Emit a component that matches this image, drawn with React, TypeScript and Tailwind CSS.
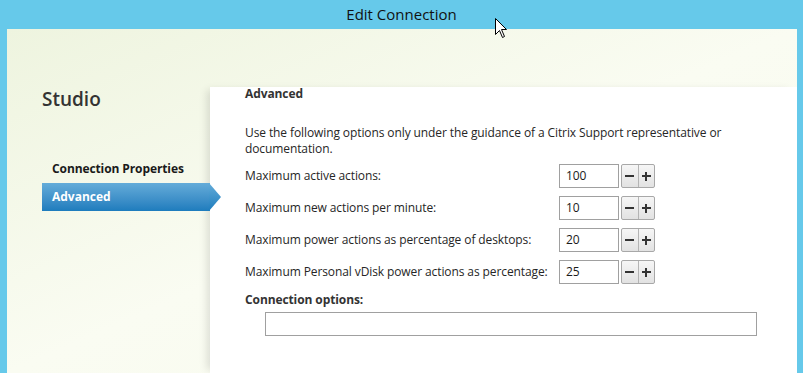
const font = { fontFamily: '"Open Sans", "Noto Sans", sans-serif' }

interface Row {
  label: string
  value: string
}

const rows: Row[] = [
  { label: 'Maximum active actions:', value: '100' },
  { label: 'Maximum new actions per minute:', value: '10' },
  { label: 'Maximum power actions as percentage of desktops:', value: '20' },
  { label: 'Maximum Personal vDisk power actions as percentage:', value: '25' },
]

function Spinner({ value }: { value: string }) {
  return (
    <div className="flex items-center gap-[2px]">
      <div className="w-[60px] h-[24px] border border-[#a0a0a0] bg-white flex items-center pl-[6px] text-[12px] text-[#1a1a1a]">
        {value}
      </div>
      <div className="flex h-[24px] w-[34px] border border-[#a8a8a8] rounded-[2px] bg-gradient-to-b from-[#f6f6f6] to-[#e2e2e2]">
        <div className="flex-1 flex items-center justify-center border-r border-[#b4b4b4]">
          <span className="block w-[9px] h-[2px] bg-[#333]" />
        </div>
        <div className="flex-1 flex items-center justify-center">
          <span className="relative block w-[9px] h-[9px]">
            <span className="absolute left-0 top-[3.5px] w-[9px] h-[2px] bg-[#333]" />
            <span className="absolute top-0 left-[3.5px] w-[2px] h-[9px] bg-[#333]" />
          </span>
        </div>
      </div>
    </div>
  )
}

function Cursor() {
  return (
    <svg className="absolute left-[495px] top-[18px]" width="13" height="21" viewBox="0 0 13 21">
      <path
        d="M0.5 0.5 L0.5 16.5 L4.5 12.5 L7.5 19.5 L9.5 18.5 L6.5 11.5 L11.5 11.5 Z"
        fill="#fff"
        stroke="#000"
        strokeWidth="1"
      />
    </svg>
  )
}

export default function App() {
  return (
    <div
      className="relative w-[803px] h-[373px] bg-[#66c9ea] flex flex-col overflow-hidden text-[#262626]"
      style={font}
    >
      <div className="h-[29px] flex items-center justify-center text-[15px] text-[#111]">
        Edit Connection
      </div>
      <Cursor />
      <div className="flex-1 ml-[7px] mr-[6px] flex bg-gradient-to-br from-[#eef4df] via-[#fafcf2] to-[#f7faed]">
        <aside className="w-[203px] shrink-0 pt-[57px]">
          <div className="pl-[35px] text-[19px] leading-[26px] font-semibold text-[#333]">Studio</div>
          <div className="mt-[47px] pl-[45px] text-[12px] font-bold leading-[20px] tracking-[-0.1px] text-[#1a1a1a]">
            Connection Properties
          </div>
          <div className="relative mt-[4px] ml-[35px] h-[28px]">
            <div className="h-full w-[168px] bg-gradient-to-b from-[#64acd9] to-[#1d7cbd] flex items-center pl-[10px] text-[12px] font-bold text-white">
              Advanced
            </div>
            <svg className="absolute left-[167px] top-0" width="13" height="28" viewBox="0 0 13 28">
              <defs>
                <linearGradient id="arr" x1="0" y1="0" x2="0" y2="1">
                  <stop offset="0" stopColor="#64acd9" />
                  <stop offset="1" stopColor="#1d7cbd" />
                </linearGradient>
              </defs>
              <path d="M0 0 L12 14 L0 28 Z" fill="url(#arr)" />
            </svg>
          </div>
        </aside>
        <main className="flex-1 mt-[58px] bg-white shadow-[-6px_0_8px_-3px_rgba(0,0,0,0.12)] pl-[35px] pr-[40px] text-[12px] tracking-[-0.1px] text-[#262626]">
          <h2 className="font-bold text-[12px] leading-[14px] text-[#333]">Advanced</h2>
          <p className="mt-[24px] leading-[16px]">
            Use the following options only under the guidance of a Citrix Support representative or
            documentation.
          </p>
          <div className="mt-[7px] flex flex-col gap-[8px]">
            {rows.map((r) => (
              <div key={r.label} className="flex items-center h-[24px]">
                <div className="w-[314px]">{r.label}</div>
                <Spinner value={r.value} />
              </div>
            ))}
          </div>
          <div className="mt-[8px] font-bold leading-[16px] text-[#333]">Connection options:</div>
          <div className="mt-[4px] ml-[20px] w-[492px] h-[24px] border border-[#a0a0a0] bg-white" />
        </main>
      </div>
    </div>
  )
}
